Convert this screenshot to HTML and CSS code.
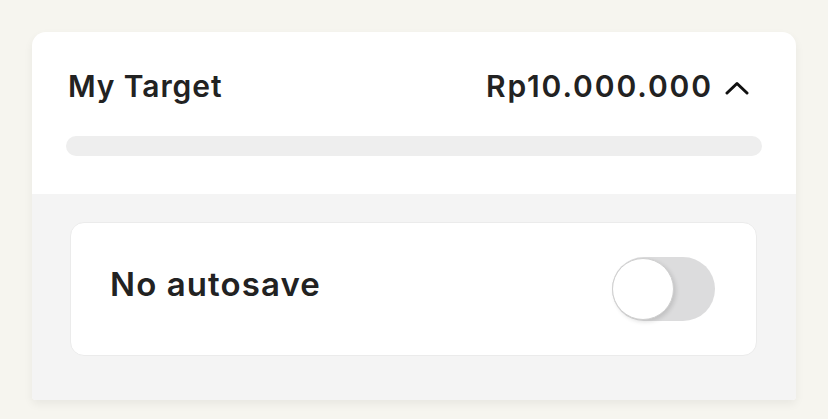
FILE: index.html
```html
<!DOCTYPE html>
<html>
<head>
<meta charset="utf-8">
<link rel="stylesheet" href="styles.css">
</head>
<body>
<div class="card">
  <div class="top">
    <div class="header">
      <span class="title">My Target</span>
      <span class="amount">Rp10.000.000
        <svg class="chev" width="24" height="14" viewBox="0 0 24 14"><path d="M2 12 L12 2.5 L22 12" fill="none" stroke="#111" stroke-width="3" stroke-linecap="round" stroke-linejoin="round"/></svg>
      </span>
    </div>
    <div class="bar"></div>
  </div>
  <div class="bottom">
    <div class="inner">
      <span class="label">No autosave</span>
      <div class="toggle"><div class="knob"></div></div>
    </div>
  </div>
</div>
</body>
</html>
```
FILE: styles.css
```css
html, body { margin: 0; padding: 0; }
body {
  background: #f6f5ef;
  width: 828px;
  height: 419px;
  overflow: hidden;
  font-family: Inter, "Noto Sans", sans-serif;
  color: #222;
}
.card {
  margin: 32px 0 0 32px;
  width: 764px;
  border-radius: 14px 14px 4px 4px;
  overflow: hidden;
  background: #fff;
  box-shadow: 0 4px 10px rgba(0,0,0,0.06);
}
.top {
  padding: 0 34px 38px 34px;
}
.header {
  height: 104px;
  box-sizing: border-box;
  display: flex;
  align-items: center;
  justify-content: space-between;
  padding: 4px 13px 0 2px;
}
.title {
  font-size: 30px;
  font-weight: 600;
  letter-spacing: 0.9px;
}
.amount {
  font-size: 30px;
  font-weight: 600;
  letter-spacing: 1.9px;
  display: flex;
  align-items: center;
  gap: 12px;
}
.chev { display: block; margin-top: 3px; }
.bar {
  height: 20px;
  border-radius: 10px;
  background: #eeeeee;
}
.bottom {
  background: #f4f4f4;
  padding: 28px 39px 44px 38px;
}
.inner {
  height: 132px;
  background: #fff;
  border: 1px solid #ebebeb;
  border-radius: 14px;
  display: flex;
  align-items: center;
  justify-content: space-between;
  padding: 0 41px 0 39px;
}
.label {
  font-size: 33px;
  font-weight: 600;
  letter-spacing: 1.1px;
  margin-bottom: 10px;
}
.toggle {
  width: 103px;
  height: 64px;
  border-radius: 32px;
  background: #dcdcdd;
  position: relative;
}
.knob {
  position: absolute;
  left: 0;
  top: 1px;
  width: 60px;
  height: 60px;
  border-radius: 50%;
  background: #fff;
  border: 1px solid #cfcfcf;
  box-shadow: 2px 2px 4px rgba(0,0,0,0.12);
}
```
